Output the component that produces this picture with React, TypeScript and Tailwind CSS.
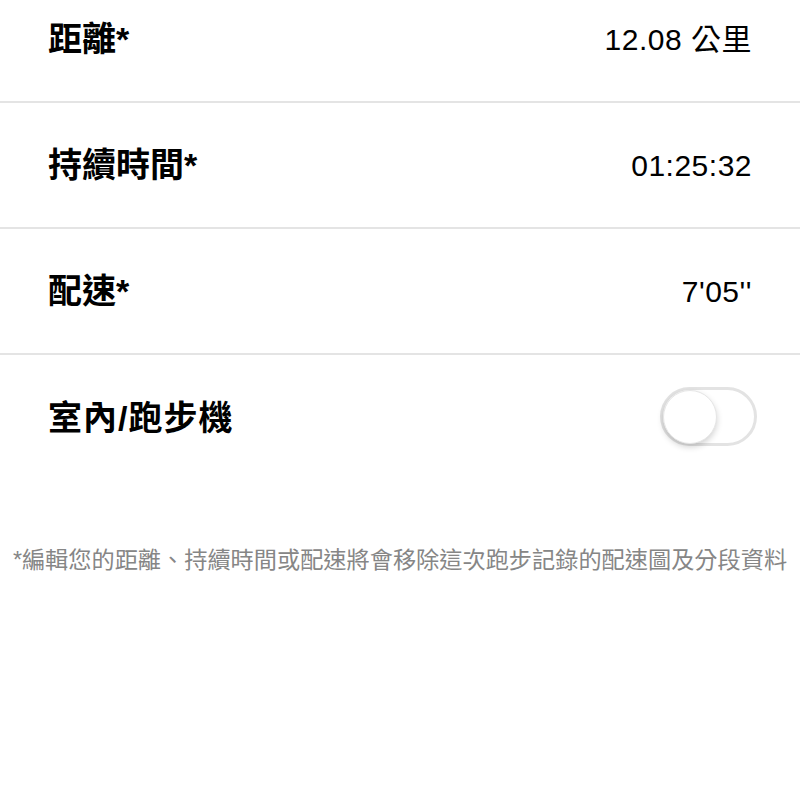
import React from "react";

const rows = [
  { label: "距離*", value: "12.08 公里" },
  { label: "持續時間*", value: "01:25:32" },
  { label: "配速*", value: "7'05''" },
];

function Toggle() {
  return (
    <div className="w-[97px] h-[59px] rounded-full border-[3px] border-[#e3e3e3] bg-white flex items-center">
      <div className="w-[54px] h-[54px] rounded-full bg-white border border-[#e6e6e6] shadow-[0_3px_6px_rgba(0,0,0,0.18)]" />
    </div>
  );
}

export default function App() {
  return (
    <main
      className="w-[800px] h-[800px] bg-white overflow-hidden text-black"
      style={{ fontFamily: '"Liberation Sans", "Noto Sans CJK TC", sans-serif' }}
    >
      <div className="-mt-[23px]">
        {rows.map((r) => (
          <div key={r.label} className="h-[126px] border-b-2 border-[#e4e4e4] flex items-center justify-between pl-[48px] pr-[48px]">
            <span className="text-[34px] font-bold">{r.label}</span>
            <span className="text-[30px] tracking-[0.5px]">{r.value}</span>
          </div>
        ))}
        <div className="h-[126px] flex items-center justify-between pl-[48px] pr-[43px]">
          <span className="text-[34px] font-bold tracking-[1px]">室內/跑步機</span>
          <div className="-mt-[3px]">
            <Toggle />
          </div>
        </div>
      </div>
      <p className="mt-[62px] text-center text-[23.2px] text-[#868686]">
        *編輯您的距離、持續時間或配速將會移除這次跑步記錄的配速圖及分段資料
      </p>
    </main>
  );
}
